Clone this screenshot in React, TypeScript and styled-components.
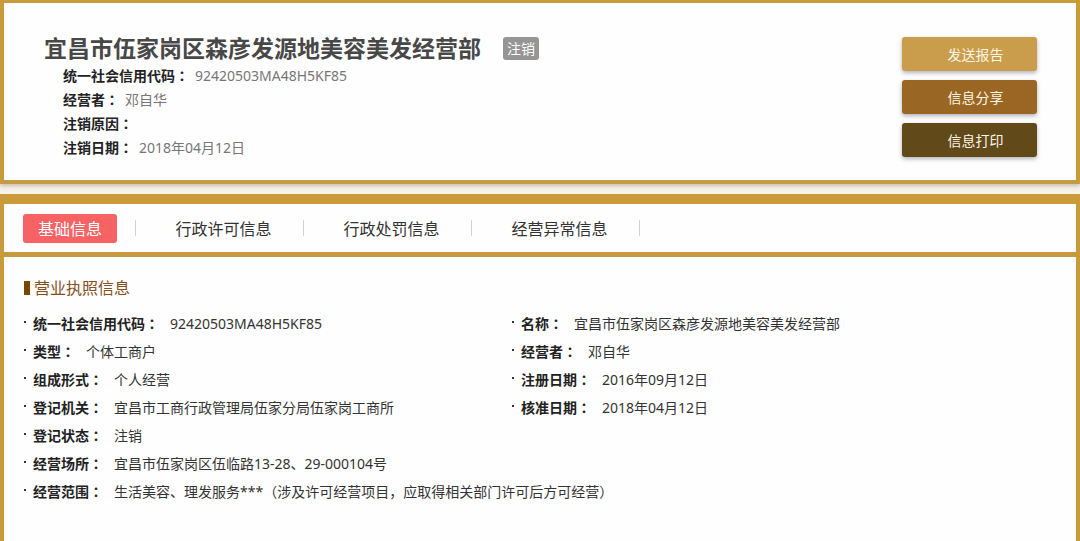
import React, { useState } from "react";
import styled, { createGlobalStyle } from "styled-components";

const gold = "#c99b3b";

const GlobalStyle = createGlobalStyle`
  * { box-sizing: border-box; }
  body {
    margin: 0;
    background: #f6f3ea;
    color: #333;
    font-family: "Noto Sans", "Noto Sans CJK SC", sans-serif;
    font-size: 14px;
  }
  button { font-family: inherit; cursor: pointer; }
  h1, h2, dl, dd { margin: 0; }
`;

const Page = styled.main`
  display: flex;
  flex-direction: column;
  gap: 10px;
  min-height: 100vh;
`;

const Summary = styled.header`
  display: flex;
  justify-content: space-between;
  align-items: flex-start;
  padding: 32px 39px 20px 40px;
  background: #fefefe;
  border: 4px solid ${gold};
  border-top-width: 3px;
  border-bottom: 4px solid #c39c46;
  box-shadow: 0 2px 4px rgba(120, 90, 60, 0.35);
`;

const TitleRow = styled.div`
  display: flex;
  align-items: center;
  gap: 22px;
  height: 26px;
  margin-bottom: 3px;
`;

const Title = styled.h1`
  font-size: 23px;
  line-height: 24px;
  font-weight: 700;
  color: #484848;
`;

const Badge = styled.span`
  padding: 0 4px;
  line-height: 23px;
  border-radius: 3px;
  background: #959595;
  color: #fff;
`;

const SummaryList = styled.dl`
  padding-left: 19px;
`;

const SummaryItem = styled.div`
  display: flex;
  gap: 6px;
  line-height: 24px;
`;

const Label = styled.dt`
  font-weight: 700;
  color: #222;
`;

const Colon = styled.span`
  font-family: "Noto Sans CJK JP", sans-serif;
  line-height: 1;
`;

const SummaryValue = styled.dd`
  color: #777;
`;

const Actions = styled.div`
  display: flex;
  flex-direction: column;
  gap: 9px;
  width: 135px;
  padding-top: 2px;
`;

const ActionButton = styled.button<{ $color: string }>`
  height: 34px;
  padding: 0 0 0 12px;
  border: 0;
  border-radius: 3px;
  background: ${(p) => p.$color};
  color: #fff6e6;
  font-size: 14px;
  box-shadow: 0 2px 4px rgba(60, 60, 90, 0.4);
`;

const Details = styled.section`
  flex: 1;
  background: #fefefe;
  border: 4px solid ${gold};
  border-top-width: 10px;
  border-bottom: 0;
`;

const Tabs = styled.nav`
  display: flex;
  align-items: center;
  height: 53px;
  padding-left: 19px;
  border-bottom: 5px solid #c69b40;
`;

const TabSlot = styled.div<{ $first?: boolean }>`
  display: flex;
  align-items: center;
  justify-content: ${(p) => (p.$first ? "flex-start" : "center")};
  width: ${(p) => (p.$first ? "113px" : "168px")};
  height: 16px;
  padding-left: ${(p) => (p.$first ? "0" : "8px")};
  border-right: 1px solid #d0d0d8;
`;

const Tab = styled.button<{ $active: boolean }>`
  height: 29px;
  padding: 0 ${(p) => (p.$active ? "15px" : "0")};
  border: 0;
  border-radius: 3px;
  background: ${(p) => (p.$active ? "#f76364" : "transparent")};
  color: ${(p) => (p.$active ? "#fff" : "#333")};
  font-size: 16px;
  white-space: nowrap;
`;

const SectionTitle = styled.h2`
  display: flex;
  align-items: center;
  gap: 4px;
  margin: 19px 0 10px 20px;
  font-size: 16px;
  line-height: 24px;
  font-weight: 400;
  color: #84501c;

  &::before {
    content: "";
    width: 6px;
    height: 14px;
    background: #7a4607;
  }
`;

const DetailList = styled.dl`
  display: grid;
  grid-template-columns: 1fr 1fr;
  padding: 0 76px 36px 20px;
`;

const DetailItem = styled.div<{ $wide?: boolean }>`
  display: flex;
  gap: 11px;
  line-height: 28px;
  grid-column: ${(p) => (p.$wide ? "1 / -1" : "auto")};

  &::before {
    content: "";
    flex: none;
    width: 2px;
    height: 2px;
    margin: 11px -4px 0 0;
    background: #333;
  }
`;

const Value = styled.dd`
  color: #333;
`;

const summary = [
  ["统一社会信用代码", "92420503MA48H5KF85"],
  ["经营者", "邓自华"],
  ["注销原因", ""],
  ["注销日期", "2018年04月12日"],
];

const actions = [
  { text: "发送报告", color: "#c99d4b" },
  { text: "信息分享", color: "#9a6624" },
  { text: "信息打印", color: "#61491a" },
];

const tabs = ["基础信息", "行政许可信息", "行政处罚信息", "经营异常信息"];

const details: { label: string; value: string; wide?: boolean }[] = [
  { label: "统一社会信用代码", value: "92420503MA48H5KF85" },
  { label: "名称", value: "宜昌市伍家岗区森彦发源地美容美发经营部" },
  { label: "类型", value: "个体工商户" },
  { label: "经营者", value: "邓自华" },
  { label: "组成形式", value: "个人经营" },
  { label: "注册日期", value: "2016年09月12日" },
  { label: "登记机关", value: "宜昌市工商行政管理局伍家分局伍家岗工商所" },
  { label: "核准日期", value: "2018年04月12日" },
  { label: "登记状态", value: "注销", wide: true },
  { label: "经营场所", value: "宜昌市伍家岗区伍临路13-28、29-000104号", wide: true },
  {
    label: "经营范围",
    value: "生活美容、理发服务***（涉及许可经营项目，应取得相关部门许可后方可经营）",
    wide: true,
  },
];

export default function App() {
  const [active, setActive] = useState(0);
  return (
    <>
      <GlobalStyle />
      <Page lang="zh-CN">
        <Summary>
          <div>
            <TitleRow>
              <Title>宜昌市伍家岗区森彦发源地美容美发经营部</Title>
              <Badge>注销</Badge>
            </TitleRow>
            <SummaryList>
              {summary.map(([label, value]) => (
                <SummaryItem key={label}>
                  <Label>
                    {label}
                    <Colon lang="ja">：</Colon>
                  </Label>
                  <SummaryValue>{value}</SummaryValue>
                </SummaryItem>
              ))}
            </SummaryList>
          </div>
          <Actions>
            {actions.map((a) => (
              <ActionButton key={a.text} type="button" $color={a.color}>
                {a.text}
              </ActionButton>
            ))}
          </Actions>
        </Summary>
        <Details>
          <Tabs>
            {tabs.map((text, i) => (
              <TabSlot key={text} $first={i === 0}>
                <Tab type="button" $active={i === active} onClick={() => setActive(i)}>
                  {text}
                </Tab>
              </TabSlot>
            ))}
          </Tabs>
          <SectionTitle>营业执照信息</SectionTitle>
          <DetailList>
            {details.map((d) => (
              <DetailItem key={d.label} $wide={d.wide}>
                <Label>
                  {d.label}
                  <Colon lang="ja">：</Colon>
                </Label>
                <Value>{d.value}</Value>
              </DetailItem>
            ))}
          </DetailList>
        </Details>
      </Page>
    </>
  );
}
